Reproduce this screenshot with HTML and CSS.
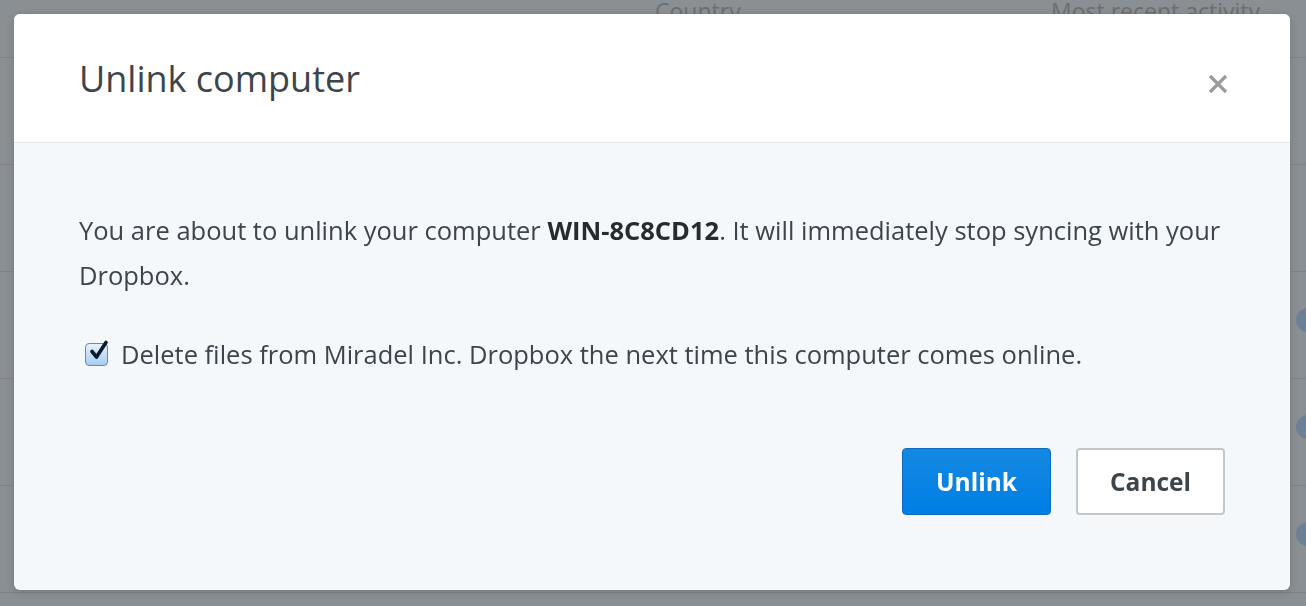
FILE: index.html
```html
<!DOCTYPE html>
<html>
<head>
<meta charset="utf-8">
<link rel="stylesheet" href="styles.css">
</head>
<body>
<div class="page">
  <div class="thead">
    <span class="col-country">Country</span>
    <span class="col-activity">Most recent activity</span>
  </div>
  <div class="row"></div>
  <div class="row"></div>
  <div class="row"><span class="info"></span></div>
  <div class="row"><span class="info">i</span></div>
  <div class="row"><span class="info">i</span></div>
</div>
<div class="modal">
  <div class="modal-header">
    <h1 class="modal-title">Unlink computer</h1>
    <button class="close" aria-label="Close">
      <svg width="22" height="22" viewBox="0 0 22 22"><path d="M3 3 L19 19 M19 3 L3 19" stroke="#9a9a9a" stroke-width="3.2" stroke-linecap="butt"/></svg>
    </button>
  </div>
  <div class="modal-body">
    <p class="msg">You are about to unlink your computer <b>WIN-8C8CD12</b>. It will immediately stop syncing with your Dropbox.</p>
    <label class="check">
      <span class="box">
        <svg width="22" height="22" viewBox="0 0 22 22"><path d="M5 11.5 L9.5 17 L19 2.5" fill="none" stroke="#0d1a2e" stroke-width="3.6" stroke-linejoin="round" stroke-linecap="round"/></svg>
      </span>
      <span>Delete files from Miradel Inc. Dropbox the next time this computer comes online.</span>
    </label>
    <div class="actions">
      <button class="btn btn-primary">Unlink</button>
      <button class="btn btn-default">Cancel</button>
    </div>
  </div>
</div>
</body>
</html>
```
FILE: styles.css
```css
html, body {
  margin: 0;
  padding: 0;
}
body {
  background: #8a8f93;
  font-family: "Open Sans", "Liberation Sans", sans-serif;
  width: 1306px;
  height: 606px;
  overflow: hidden;
}
.page {
  width: 1306px;
}
.thead {
  height: 58px;
  border-bottom: 1px solid #7f8387;
  position: relative;
  font-size: 23px;
  color: #6a6f74;
  box-sizing: border-box;
}
.col-country {
  position: absolute;
  left: 655px;
  top: -5px;
}
.col-activity {
  position: absolute;
  left: 1051px;
  top: -5px;
}
.row {
  height: 106px;
  border-bottom: 1px solid #7f8387;
  position: relative;
}
.info {
  position: absolute;
  left: 1296px;
  top: 36px;
  width: 24px;
  height: 24px;
  border-radius: 50%;
  background: #6d8196;
  color: #8a8f93;
  font-weight: 800;
  font-size: 18px;
  line-height: 24px;
  text-align: center;
  font-style: italic;
}
.modal {
  position: fixed;
  left: 14px;
  top: 14px;
  width: 1276px;
  border-radius: 6px;
  overflow: hidden;
  background: #f5f8fb;
  box-shadow: 0 2px 8px rgba(0,0,0,0.15);
}
.modal-header {
  height: 128px;
  background: #fff;
  border-bottom: 1px solid #e2e4e6;
  display: flex;
  align-items: center;
  justify-content: space-between;
  padding: 0 61px 0 65px;
}
.modal-title {
  margin: 0;
  font-weight: 400;
  font-size: 36px;
  color: #3d454c;
}
.close {
  border: 0;
  background: transparent;
  padding: 0;
  margin-top: 12px;
  width: 22px;
  height: 22px;
  display: block;
}
.close svg { display: block; }
.modal-body {
  padding: 65px 65px 75px 65px;
  color: #3d454c;
  font-size: 25.5px;
}
.msg {
  margin: 0;
  line-height: 45px;
}
.msg b {
  font-weight: 700;
  color: #262b30;
}
.check {
  display: flex;
  align-items: center;
  margin-top: 34px;
  line-height: 45px;
  padding-left: 6px;
  gap: 13px;
}
.box {
  width: 21px;
  height: 21px;
  border: 1px solid #6f89a8;
  border-radius: 4px;
  background: linear-gradient(#e6f1fc, #a8cdf3);
  position: relative;
  flex: none;
}
.box svg {
  position: absolute;
  left: 1px;
  top: -4px;
}
.actions {
  display: flex;
  justify-content: flex-end;
  gap: 25px;
  margin-top: 71px;
}
.btn {
  width: 149px;
  height: 67px;
  border-radius: 4px;
  font-family: "Open Sans", "Liberation Sans", sans-serif;
  font-size: 24.5px;
  font-weight: 700;
  padding: 0;
  box-sizing: border-box;
}
.btn-primary {
  background: linear-gradient(#1489e2, #007ee5);
  border: 1px solid #0b6cbf;
  color: #fff;
}
.btn-default {
  background: #fff;
  border: 2px solid #c4c6c8;
  color: #3d454c;
}
```
